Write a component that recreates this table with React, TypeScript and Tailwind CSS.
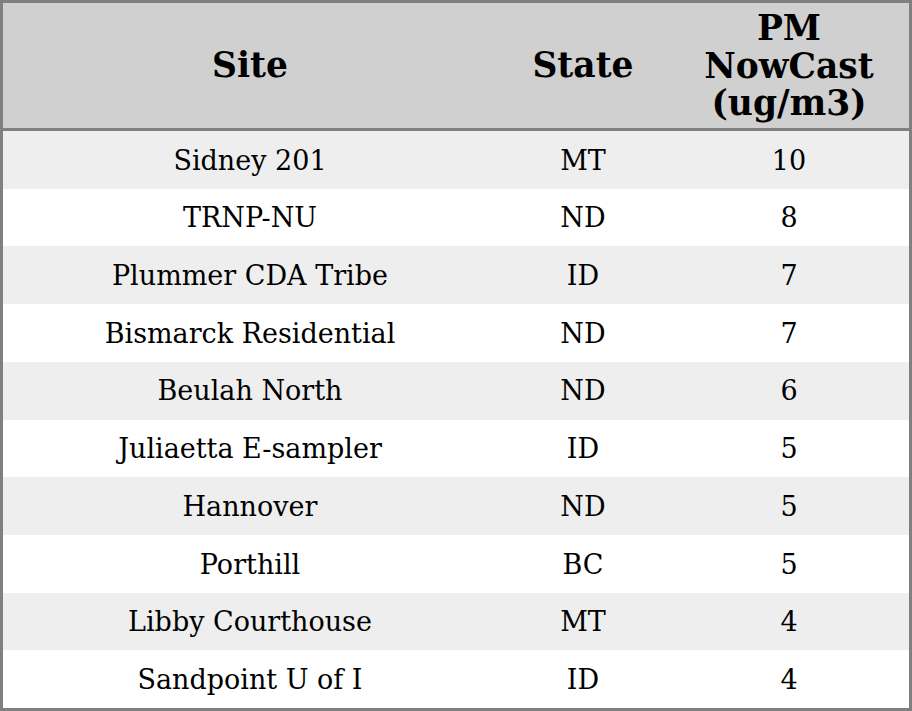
const rows = [
  { site: 'Sidney 201', state: 'MT', pm: 10 },
  { site: 'TRNP-NU', state: 'ND', pm: 8 },
  { site: 'Plummer CDA Tribe', state: 'ID', pm: 7 },
  { site: 'Bismarck Residential', state: 'ND', pm: 7 },
  { site: 'Beulah North', state: 'ND', pm: 6 },
  { site: 'Juliaetta E-sampler', state: 'ID', pm: 5 },
  { site: 'Hannover', state: 'ND', pm: 5 },
  { site: 'Porthill', state: 'BC', pm: 5 },
  { site: 'Libby Courthouse', state: 'MT', pm: 4 },
  { site: 'Sandpoint U of I', state: 'ID', pm: 4 },
];

export default function App() {
  return (
    <div className="w-[912px] h-[711px] bg-white font-['DejaVu_Serif',serif] text-black">
      <div className="h-full border-[3px] border-[#808080] flex flex-col">
        {/* header */}
        <div className="grid grid-cols-[494px_172px_1fr] h-[125px] bg-[#d0d0d0] border-b-[3px] border-[#808080] box-content text-[34.5px] font-bold leading-[37.5px]">
          <div className="flex items-center justify-center text-center">Site</div>
          <div className="flex items-center justify-center text-center">State</div>
          <div className="flex items-center justify-center text-center pt-[2px]">
            PM
            <br />
            NowCast
            <br />
            (ug/m3)
          </div>
        </div>

        {/* rows */}
        <div className="flex-1 flex flex-col">
          {rows.map((r, idx) => (
            <div
              key={idx}
              className={`flex-1 grid grid-cols-[494px_172px_1fr] text-[27px] pt-[2px] ${idx % 2 === 0 ? 'bg-[#eeeeee]' : 'bg-white'}`}
            >
              <div className="flex items-center justify-center">{r.site}</div>
              <div className="flex items-center justify-center">{r.state}</div>
              <div className="flex items-center justify-center">{r.pm}</div>
            </div>
          ))}
        </div>
      </div>
    </div>
  );
}
